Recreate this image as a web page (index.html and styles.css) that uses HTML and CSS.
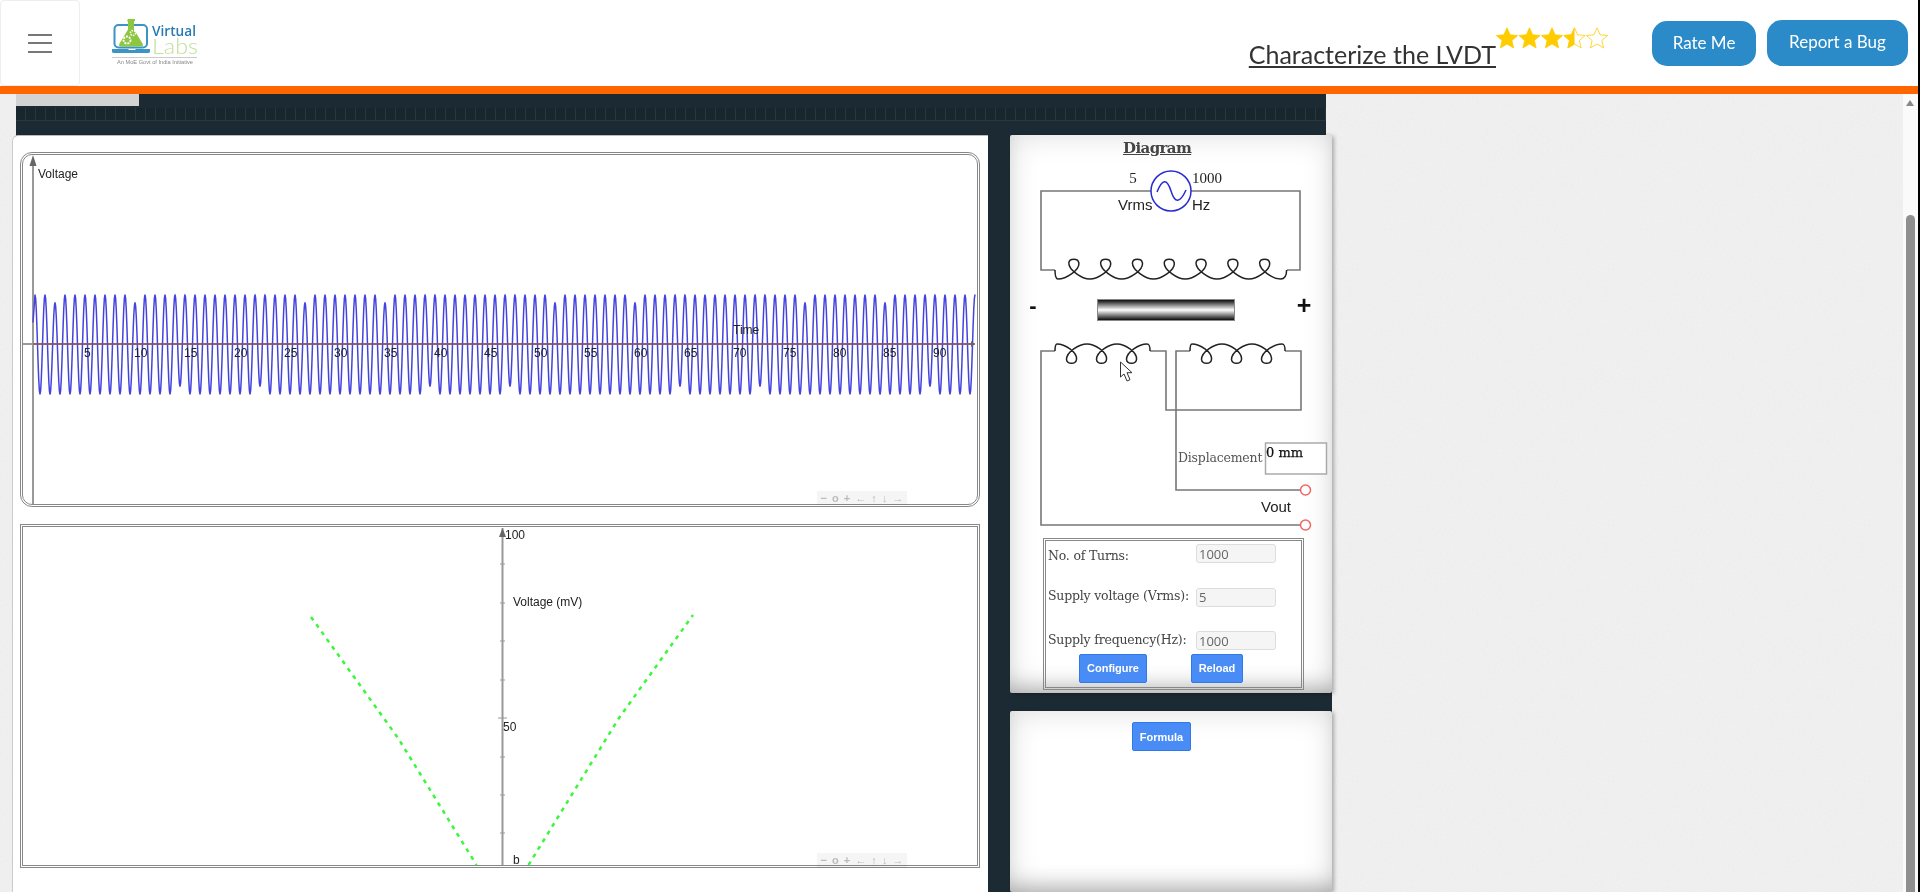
FILE: index.html
```html
<!DOCTYPE html>
<html lang="en">
<head>
    <meta charset="UTF-8">
    <meta name="viewport" content="width=device-width, initial-scale=1.0">
    <title>Characterize the LVDT</title>
    <link rel="stylesheet" href="styles.css">
</head>
<body>
    <header class="topbar">
        <button class="menu-button" aria-label="Menu">
            <span></span><span></span><span></span>
        </button>
        <svg class="logo" viewBox="110 17 90 50" width="90" height="50">
            <rect x="114.5" y="25" width="32.5" height="22.5" rx="4" fill="none" stroke="#3a94c4" stroke-width="2"/>
            <path d="M112 49h16l1 1h6l1-1h14v2.500q0 1.500-2 1.500h-34q-2 0-2-1.500z" fill="#3a94c4"/>
            <path d="M128 19h7v2l-1 .5v8l8.500 14q1.500 3-2 3h-19q-3.500 0-2-3l8.500-14v-8l-1-.5z" fill="#8dc63f"/>
            <circle cx="127" cy="40" r="3.500" fill="none" stroke="#fff" stroke-width="2" stroke-dasharray="2 1"/>
            <circle cx="133" cy="33" r="2.500" fill="none" stroke="#fff" stroke-width="1.500" stroke-dasharray="1.500 1"/>
            <text x="152" y="36" class="logo-virtual" textLength="44" lengthAdjust="spacingAndGlyphs">Virtual</text>
            <text x="152" y="53.500" class="logo-labs" textLength="46" lengthAdjust="spacingAndGlyphs">Labs</text>
            <line x1="112" y1="57.500" x2="197" y2="57.500" stroke="#ccc"/>
            <text x="117" y="64" class="logo-tag" textLength="76" lengthAdjust="spacingAndGlyphs">An MoE Govt of India Initiative</text>
        </svg>

        <div class="exp-title">
            <a class="exp-name">Characterize the LVDT</a>
            <svg class="stars" viewBox="0 0 114 22" width="114" height="22">
                <defs>
                    <path id="star" d="M11 .8l3.100 7 7.500.7-5.700 5 1.700 7.400-6.600-3.900-6.600 3.900 1.700-7.400-5.700-5 7.500-.7z"/>
                    <clipPath id="half-star"><rect x="0" y="0" width="11" height="22"/></clipPath>
                </defs>
                <use href="#star" class="star-full"/>
                <use href="#star" x="22.500" class="star-full"/>
                <use href="#star" x="45" class="star-full"/>
                <g transform="translate(67.500 0)">
                    <use href="#star" class="star-empty"/>
                    <use href="#star" class="star-full" clip-path="url(#half-star)"/>
                </g>
                <use href="#star" x="90" class="star-empty"/>
            </svg>
        </div>
        <a class="top-btn rate-btn">Rate Me</a>
        <a class="top-btn bug-btn">Report a Bug</a>
    </header>

    <main class="page">
        <div class="content">
            <div class="panel">
                <div class="panel-tab"></div>
                <div class="slots"></div>

                <div class="workbench">
                    <section class="graphs">
                        <div class="board board-round">
                            <svg id="wave-plot" class="plot" viewBox="23 155 953 349" width="953" height="349">
                                <line x1="33" y1="160" x2="33" y2="504" class="axis"/>
                                <path d="M33 155l-3.500 11h7z" fill="#666"/>
                                <line x1="23" y1="344" x2="975" y2="344" class="axis"/>
                                <path id="wave-line" class="wave" d=""/>
                                <line x1="33" y1="344" x2="972" y2="344" class="signal"/>
                                <path d="M975 344l-4-3v6z" fill="#666"/>
                                <text x="38" y="178" class="plot-label">Voltage</text>
                                <text x="733" y="334" class="plot-label">Time</text>
                                <g class="plot-label">
                                    <text x="84" y="357">5</text><text x="134" y="357">10</text>
                                    <text x="184" y="357">15</text><text x="234" y="357">20</text>
                                    <text x="284" y="357">25</text><text x="334" y="357">30</text>
                                    <text x="384" y="357">35</text><text x="434" y="357">40</text>
                                    <text x="484" y="357">45</text><text x="534" y="357">50</text>
                                    <text x="584" y="357">55</text><text x="634" y="357">60</text>
                                    <text x="684" y="357">65</text><text x="733" y="357">70</text>
                                    <text x="783" y="357">75</text><text x="833" y="357">80</text>
                                    <text x="883" y="357">85</text><text x="933" y="357">90</text>
                                </g>
                            </svg>
                            <div class="navbar">&minus; o + &larr; &uarr; &darr; &rarr;</div>
                        </div>

                        <div class="board board-square">
                            <svg class="plot" viewBox="23 527 953 338" width="953" height="338">
                                <line x1="502.500" y1="528" x2="502.500" y2="865" class="axis"/>
                                <path d="M502.500 528l-3.500 9h7z" fill="#666"/>
                                <path class="ticks" d="M500 564h5M500 603h5M500 641h5M500 680h5M498 718h9M500 757h5M500 795h5M500 833h5"/>
                                <text x="505" y="539" class="plot-label">100</text>
                                <text x="513" y="606" class="plot-label">Voltage (mV)</text>
                                <text x="503" y="731" class="plot-label">50</text>
                                <text x="513" y="864" class="plot-label">b</text>
                                <path class="dashes" d="M311 617L398 738L476.500 865"/>
                                <path class="dashes" d="M528.500 865L619 718L693 615"/>
                            </svg>
                            <div class="navbar">&minus; o + &larr; &uarr; &darr; &rarr;</div>
                        </div>
                    </section>

                    <aside class="side">
                        <section class="card card-diagram">
                            <h3 class="card-title">Diagram</h3>
                            <svg class="circuit" viewBox="1010 160 322 376" width="322" height="376">
                                <defs>
                                    <linearGradient id="core" x1="0" y1="0" x2="0" y2="1">
                                        <stop offset="0" stop-color="#000"/>
                                        <stop offset=".5" stop-color="#fff"/>
                                        <stop offset="1" stop-color="#000"/>
                                    </linearGradient>
                                </defs>
                                <path class="wire" d="M1151 191H1041V270H1055"/>
                                <path class="wire" d="M1191 191H1300V270H1287"/>
                                <path class="coil" d="M1055 270c0 6 1 9 3 9
                                    c8 0 22-9 20.800-16c-.5-5-9.500-5-10 0c0 7 13 16 21 16
                                    c8 0 22-9 20.800-16c-.5-5-9.500-5-10 0c0 7 13 16 21 16
                                    c8 0 22-9 20.800-16c-.5-5-9.500-5-10 0c0 7 13 16 21 16
                                    c8 0 22-9 20.800-16c-.5-5-9.500-5-10 0c0 7 13 16 21 16
                                    c8 0 22-9 20.800-16c-.5-5-9.500-5-10 0c0 7 13 16 21 16
                                    c8 0 22-9 20.800-16c-.5-5-9.500-5-10 0c0 7 13 16 21 16
                                    c8 0 22-9 20.800-16c-.5-5-9.500-5-10 0c0 7 13 16 21 16
                                    c3 0 6-1 6-9"/>
                                <circle cx="1171" cy="191" r="20" class="source"/>
                                <path d="M1157 192Q1165 172 1171 191T1186 190" class="source"/>
                                <text x="1133" y="183" class="ckt-serif" text-anchor="middle">5</text>
                                <text x="1192" y="183" class="ckt-serif">1000</text>
                                <text x="1118" y="210" class="ckt-sans">Vrms</text>
                                <text x="1192" y="210" class="ckt-sans">Hz</text>

                                <text x="1033" y="313" class="ckt-sign" text-anchor="middle">-</text>
                                <rect x="1097.500" y="299.500" width="137" height="21" fill="url(#core)" stroke="#888"/>
                                <text x="1304" y="314" class="ckt-sign ckt-plus" text-anchor="middle">+</text>

                                <path class="wire" d="M1055 351H1041V525H1301"/>
                                <path class="wire" d="M1150 351H1166V410H1176"/>
                                <path class="wire" d="M1190 351H1176V490H1301"/>
                                <path class="wire" d="M1285 351H1301V410H1176"/>
                                <path class="coil" d="M1055 351c0-5 .5-7 2-7
                                    c7.500 0 20.500 8 19.500 15.500c-.5 5-9.500 5-10 0c0-7.500 12.500-15.500 20.500-15.500
                                    c7.500 0 20.500 8 19.500 15.500c-.5 5-9.500 5-10 0c0-7.500 12.500-15.500 20.500-15.500
                                    c7.500 0 20.500 8 19.500 15.500c-.5 5-9.500 5-10 0c0-7.500 12.500-15.500 20.500-15.500
                                    c2 0 3 1 3 7"/>
                                <path class="coil" d="M1190 351c0-5 .5-7 2-7
                                    c7.500 0 20.500 8 19.500 15.500c-.5 5-9.500 5-10 0c0-7.500 12.500-15.500 20.500-15.500
                                    c7.500 0 20.500 8 19.500 15.500c-.5 5-9.500 5-10 0c0-7.500 12.500-15.500 20.500-15.500
                                    c7.500 0 20.500 8 19.500 15.500c-.5 5-9.500 5-10 0c0-7.500 12.500-15.500 20.500-15.500
                                    c2 0 3 1 3 7"/>
                                <circle cx="1305.500" cy="490" r="5" class="terminal"/>
                                <circle cx="1305.500" cy="525" r="5" class="terminal"/>
                                <text x="1261" y="512" class="ckt-sans">Vout</text>
                                <text x="1178" y="462" class="ckt-label">Displacement</text>
                                <rect x="1265.500" y="443" width="61" height="31" fill="#fff" stroke="#aaa" stroke-width="1.500"/>
                                <text x="1266" y="457" class="ckt-value">0 mm</text>
                                <path class="pointer" d="M1120.500 362v15l3.500-3 3 7 3-1.300-3-7h5z"/>
                            </svg>

                            <form class="config">
                                <div class="config-row">
                                    <label>No. of Turns:</label>
                                    <input type="text" value="1000" disabled>
                                </div>
                                <div class="config-row">
                                    <label>Supply voltage (Vrms):</label>
                                    <input type="text" value="5" disabled>
                                </div>
                                <div class="config-row">
                                    <label>Supply frequency(Hz):</label>
                                    <input type="text" value="1000" disabled>
                                </div>
                                <div class="config-actions">
                                    <button type="button" class="action btn-configure">Configure</button>
                                    <button type="button" class="action btn-reload">Reload</button>
                                </div>
                            </form>
                        </section>

                        <section class="card card-formula">
                            <button type="button" class="action btn-formula">Formula</button>
                        </section>
                    </aside>
                </div>
            </div>
        </div>

        <div class="scrollbar">
            <span class="scroll-up"></span>
            <span class="scroll-thumb"></span>
        </div>
    </main>

    <script src="script.js"></script>
</body>
</html>
```

FILE: styles.css
```css
/* Reset default margin and padding */
html, body {
    margin: 0;
    padding: 0;
    height: 892px;
    overflow: hidden;
}

body {
    background-color: #000;
    padding-right: 2px;
    box-sizing: border-box;
    font-family: "Liberation Sans", Arial, sans-serif;
}

/* Top bar */
.topbar {
    height: 86px;
    background-color: #fff;
    display: flex;
    align-items: flex-start;
    border-bottom: 8px solid #f60;
}

.menu-button {
    width: 80px;
    height: 86px;
    flex: none;
    background: #fff;
    border: 1px solid #eee;
    border-radius: 4px;
    display: flex;
    flex-direction: column;
    align-items: center;
    justify-content: center;
    gap: 6.500px;
    padding: 0;
}

.menu-button span {
    width: 24px;
    height: 2px;
    background-color: #777;
}

.logo {
    margin: 17px 0 0 30px;
    flex: none;
}

.logo-virtual {
    font-family: "Open Sans", sans-serif;
    font-size: 15px;
    font-weight: 600;
    fill: #2a7ab0;
}

.logo-labs {
    font-family: Lato, sans-serif;
    font-size: 22px;
    font-weight: 300;
    fill: #c3e0a0;
}

.logo-tag {
    font-family: "Liberation Sans", Arial, sans-serif;
    font-size: 6px;
    fill: #888;
}

.exp-title {
    margin-left: auto;
    display: flex;
    align-items: flex-start;
}

.exp-name {
    margin-top: 39px;
    font-family: Lato, sans-serif;
    font-size: 25px;
    line-height: 30px;
    color: #333;
    text-decoration: underline;
}

.stars {
    margin-top: 27px;
}

.star-full {
    fill: #fc0;
    stroke: #fc0;
    stroke-width: .8;
}

.star-empty {
    fill: #fff;
    stroke: #fc0;
    stroke-width: .8;
}

.top-btn {
    margin-top: 21px;
    height: 45px;
    box-sizing: border-box;
    background-color: #2a8bc8;
    border-radius: 15px;
    color: #fff;
    font-family: Lato, sans-serif;
    font-size: 17px;
    line-height: 44px;
    text-align: center;
}

.rate-btn {
    width: 104px;
    margin-left: 42px;
}

.bug-btn {
    width: 141px;
    margin-left: 11px;
    margin-right: 10px;
    margin-top: 20px;
    line-height: 44px;
    height: 46px;
}

/* Page below the top bar */
.page {
    display: flex;
    height: 798px;
}

.content {
    flex: 1;
    min-width: 0;
    background-color: #f2f2f2;
    background-image: url("data:image/svg+xml,%3Csvg xmlns='http://www.w3.org/2000/svg' width='256' height='256'%3E%3Cfilter id='n'%3E%3CfeTurbulence type='fractalNoise' baseFrequency='.8' numOctaves='3'/%3E%3CfeColorMatrix values='0 0 0 0 .5 0 0 0 0 .5 0 0 0 0 .5 0 0 0 .12 0'/%3E%3C/filter%3E%3Crect width='256' height='256' filter='url(%23n)'/%3E%3C/svg%3E");
    padding-left: 16px;
    overflow: hidden;
}

.panel {
    width: 1310px;
    height: 100%;
    background-color: #1c2b33;
    display: flex;
    flex-direction: column;
}

.panel-tab {
    width: 123px;
    height: 12px;
    background-color: #d3d3d3;
}

.slots {
    height: 12px;
    margin-top: 2px;
    border-bottom: 1px solid #28363d;
    background: repeating-linear-gradient(90deg, #18262d 0, #18262d 9px, #28363d 9px, #28363d 10px);
}

.workbench {
    display: flex;
    gap: 22px;
    flex: 1;
    min-height: 0;
    margin: 14px -6px 0 -4px;
}

/* Left column with the two plots */
.graphs {
    width: 976px;
    flex: none;
    box-sizing: border-box;
    background-color: #fff;
    border-radius: 6px 0 0 0;
    border-top: 1px solid #bbb;
    border-left: 1px solid #ccc;
    padding: 16px 8px 0 7px;
    display: flex;
    flex-direction: column;
    gap: 17px;
}

.board {
    position: relative;
    border: 3px double #888;
}

.board-round {
    border-radius: 12px;
}

.plot {
    display: block;
    overflow: visible;
}

.axis {
    stroke: #999;
    stroke-width: 2;
}

.ticks {
    stroke: #999;
    stroke-width: 1;
    fill: none;
}

.wave {
    fill: none;
    stroke: #4444dd;
    stroke-width: 1.500;
}

.signal {
    stroke: #8e5560;
    stroke-width: 1.500;
}

.dashes {
    fill: none;
    stroke: #3df53d;
    stroke-width: 2.500;
    stroke-dasharray: 4 5;
}

.plot-label {
    font-family: "Liberation Sans", Arial, sans-serif;
    font-size: 12px;
    fill: #222;
}

.navbar {
    position: absolute;
    right: 70px;
    bottom: -1px;
    width: 90px;
    height: 14px;
    background-color: #f5f5f5;
    mix-blend-mode: multiply;
    color: #bbb;
    font-size: 11px;
    font-weight: bold;
    word-spacing: 2px;
    line-height: 14px;
    text-align: center;
    white-space: nowrap;
}

.board-square .navbar {
    bottom: -3px;
    height: 15px;
}

/* Right column with the diagram and the formula */
.side {
    width: 322px;
    flex: none;
    display: flex;
    flex-direction: column;
    gap: 18px;
    background-color: #1c2b33;
    border-radius: 0 6px 6px 0;
}

.card {
    background-color: #fff;
    box-shadow: inset 0 0 30px rgba(0, 0, 0, .14),
        inset 0 -16px 22px -12px rgba(0, 0, 0, .28),
        2px 1px 4px rgba(0, 0, 0, .3);
    border-radius: 2px;
}

.card-diagram {
    height: 558px;
    flex: none;
    position: relative;
}

.card-formula {
    flex: 1;
    padding: 11px 0 0 122px;
}

.card-title {
    margin: 0;
    height: 25px;
    padding-left: 113px;
    font-family: "DejaVu Serif", serif;
    font-size: 15px;
    font-weight: bold;
    letter-spacing: -.6px;
    line-height: 27px;
    color: #444;
    text-decoration: underline;
}

.circuit {
    display: block;
}

.wire {
    fill: none;
    stroke: #777;
    stroke-width: 1.600;
}

.coil {
    fill: none;
    stroke: #222;
    stroke-width: 1.500;
}

.source {
    fill: none;
    stroke: #2a2ad0;
    stroke-width: 1.500;
}

.terminal {
    fill: #fff;
    stroke: #e66;
    stroke-width: 1.500;
}

.pointer {
    fill: #fff;
    stroke: #333;
    stroke-width: 1;
}

.ckt-serif {
    font-family: "Liberation Serif", serif;
    font-size: 15px;
    fill: #222;
}

.ckt-sans {
    font-family: "Liberation Sans", Arial, sans-serif;
    font-size: 15px;
    fill: #222;
}

.ckt-sign {
    font-family: "Liberation Sans", Arial, sans-serif;
    font-size: 22px;
    font-weight: bold;
    fill: #111;
}

.ckt-plus {
    font-size: 25px;
}

.ckt-label {
    font-family: "DejaVu Serif", serif;
    font-size: 12.500px;
    letter-spacing: -.2px;
    fill: #555;
}

.ckt-value {
    font-family: "DejaVu Serif", serif;
    font-size: 13px;
    fill: #111;
    stroke: #111;
    stroke-width: .25;
}

/* Configuration form */
.config {
    position: absolute;
    left: 33px;
    top: 403px;
    width: 261px;
    height: 152px;
    box-sizing: border-box;
    border: 3px double #888;
    padding: 3px 0 0 2px;
}

.config-row {
    display: flex;
    align-items: center;
    height: 19px;
    margin-bottom: 24.500px;
}

.config-row label {
    width: 148px;
    flex: none;
    margin-bottom: 3px;
    font-family: "DejaVu Serif", serif;
    font-size: 12.500px;
    letter-spacing: -.2px;
    color: #444;
    white-space: nowrap;
}

.config-row:first-child label {
    margin: 3px 0 0;
}

.config-row input {
    width: 80px;
    height: 19px;
    box-sizing: border-box;
    padding: 0 2px;
    border: 1px solid #ddd;
    border-radius: 3px;
    background-color: #f5f5f5;
    font-family: "Open Sans", sans-serif;
    font-size: 13px;
    color: #666;
}

.config-actions {
    display: flex;
    gap: 44px;
    margin-top: -21px;
    padding-left: 31px;
}

.action {
    height: 29px;
    padding: 0;
    border: 1px solid #3079ed;
    border-radius: 2px;
    background-color: #4a8cf6;
    color: #fff;
    font-family: "Liberation Sans", Arial, sans-serif;
    font-size: 11px;
    font-weight: bold;
}

.btn-configure {
    width: 68px;
}

.btn-reload {
    width: 52px;
}

.btn-formula {
    width: 59px;
}

/* Fake page scrollbar */
.scrollbar {
    width: 15px;
    flex: none;
    position: relative;
    background-color: #fafafa;
}

.scroll-up {
    position: absolute;
    left: 3px;
    top: 6px;
    border-left: 4.500px solid transparent;
    border-right: 4.500px solid transparent;
    border-bottom: 6px solid #888;
}

.scroll-thumb {
    position: absolute;
    left: 3px;
    right: 3px;
    top: 121px;
    bottom: 0;
    border-radius: 5px 5px 0 0;
    background-color: #8f8f8f;
}
```

FILE: script.js
```js
// Draws the sampled LVDT output on the first plot
const MID = 344.5;
const AMP = 50;
const LOW = 42;
const lowTops = [2, 10, 27, 35, 52, 60, 77, 85];
const lowBottoms = [14, 22, 39, 47, 64, 72, 89];

const extremes = [];
for (let n = 0; n < 95; n++) {
    extremes.push([35 + 10 * n, MID - (lowTops.includes(n) ? LOW : AMP)]);
    extremes.push([40 + 10 * n, MID + (lowBottoms.includes(n) ? LOW : AMP)]);
}

let d = "M33 " + (MID - 22);
for (let i = 0; i < extremes.length - 1; i++) {
    const [x0, y0] = extremes[i];
    const [x1, y1] = extremes[i + 1];
    if (x1 > 976) break;
    for (let s = 0; s <= 8; s++) {
        const t = s / 8;
        const x = x0 + (x1 - x0) * t;
        const y = y0 + (y1 - y0) * (1 - Math.cos(Math.PI * t)) / 2;
        d += " L" + x.toFixed(2) + " " + y.toFixed(2);
    }
}
document.getElementById("wave-line").setAttribute("d", d);
```
